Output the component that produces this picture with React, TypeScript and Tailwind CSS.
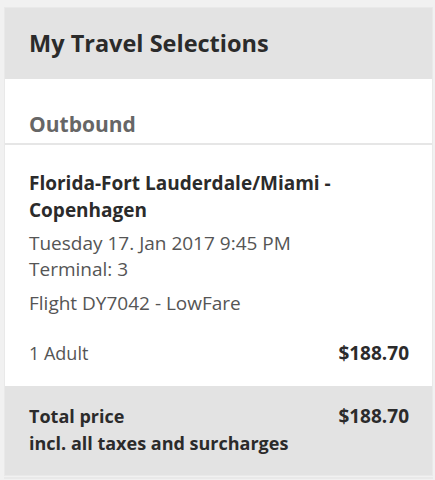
export default function App() {
  return (
    <div className="min-h-screen bg-[#f1f1f1] pl-1 pr-[2px] pt-[7px] font-['Open_Sans',sans-serif]">
      <div className="border border-[#e9e9e9]">
        {/* Header */}
        <div className="flex h-[71px] items-center bg-[#e3e3e3] px-6">
          <h1 className="text-[23.5px] font-bold text-[#2b2b2b]">My Travel Selections</h1>
        </div>

        {/* Outbound */}
        <div className="h-[64px] bg-white px-6 pt-[33px]">
          <h2 className="text-[21px] leading-[24px] font-bold text-[#666]">Outbound</h2>
        </div>
        <div className="h-[2px] bg-[#e6e6e6]" />

        {/* Flight details */}
        <div className="bg-white pl-6 pr-[23px] pt-[25px] pb-[20px]">
          <p className="text-[19px] leading-[27px] font-bold text-[#2b2b2b]">
            Florida-Fort Lauderdale/Miami -<br />
            Copenhagen
          </p>
          <p className="mt-[6px] text-[19px] leading-[26px] text-[#555]">
            Tuesday 17. Jan 2017 9:45 PM
            <br />
            Terminal: 3
          </p>
          <p className="mt-[8px] text-[19px] leading-[26px] text-[#555]">Flight DY7042 - LowFare</p>
          <div className="mt-[24px] flex items-center justify-between leading-[26px]">
            <span className="text-[18px] text-[#555]">1 Adult</span>
            <span className="text-[19px] font-bold text-[#2b2b2b]">$188.70</span>
          </div>
        </div>

        {/* Total */}
        <div className="flex h-[89px] items-start justify-between bg-[#e3e3e3] pl-6 pr-[23px] pt-[17px]">
          <p className="text-[18px] leading-[27px] font-bold text-[#2b2b2b]">
            Total price
            <br />
            incl. all taxes and surcharges
          </p>
          <span className="text-[19px] leading-[27px] font-bold text-[#2b2b2b]">$188.70</span>
        </div>
      </div>
      <div className="mt-[1px] h-[2px] border border-[#e9e9e9] bg-white" />
    </div>
  )
}
